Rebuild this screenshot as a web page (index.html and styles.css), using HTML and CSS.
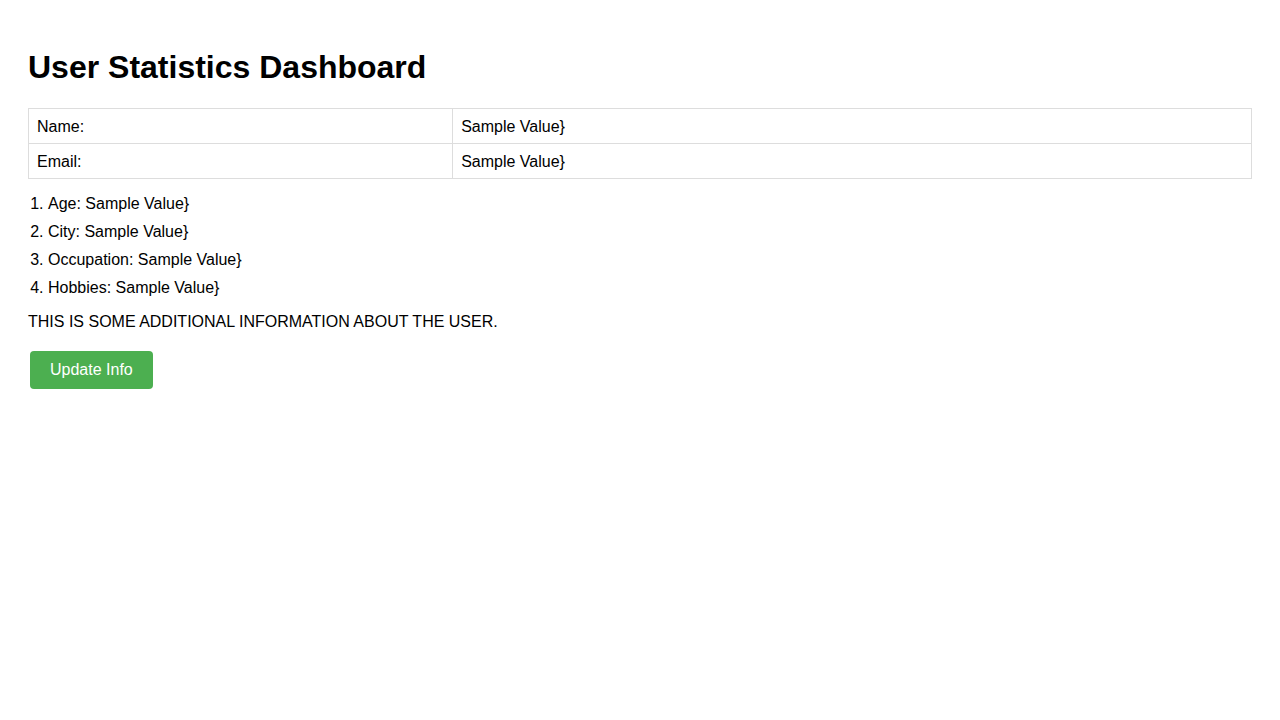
FILE: index.html
```html
<!DOCTYPE html>
<html lang="en">
<head>
<meta charset="utf-8">
<title>User Statistics Dashboard</title>
<link rel="stylesheet" href="styles.css">
</head>
<body>
<h1 class="title">User Statistics Dashboard</h1>
<table class="info-table">
  <tr><td>Name:</td><td>Sample Value}</td></tr>
  <tr><td>Email:</td><td>Sample Value}</td></tr>
</table>
<ol class="stats-list">
  <li>Age: Sample Value}</li>
  <li>City: Sample Value}</li>
  <li>Occupation: Sample Value}</li>
  <li>Hobbies: Sample Value}</li>
</ol>
<p class="extra">This is some additional information about the user.</p>
<div class="actions"><button class="btn">Update Info</button></div>
</body>
</html>
```
FILE: styles.css
```css
body {
  margin: 8px;
  padding: 20px;
  font-family: "Liberation Sans", Arial, sans-serif;
  font-size: 16px;
  color: #000;
  background: #fff;
}
.title {
  font-size: 32px;
  font-weight: bold;
  margin: 21px 0 22px;
}
.info-table {
  width: 100%;
  border-collapse: collapse;
}
.info-table td {
  border: 1px solid #ddd;
  padding: 9px 8px 7px;
  text-align: left;
}
.stats-list {
  margin: 16px 0;
  padding-left: 20px;
}
.stats-list li {
  margin-bottom: 10px;
}
.extra {
  text-transform: uppercase;
  margin: 16px 0;
}
.actions {
  padding: 4px 2px 0;
}
.btn {
  display: block;
  margin: 0;
  background: #4CAF50;
  color: #fff;
  border: none;
  border-radius: 4px;
  padding: 10px 20px;
  font-family: "Liberation Sans", Arial, sans-serif;
  font-size: 16px;
  line-height: 18px;
  cursor: pointer;
}
```
